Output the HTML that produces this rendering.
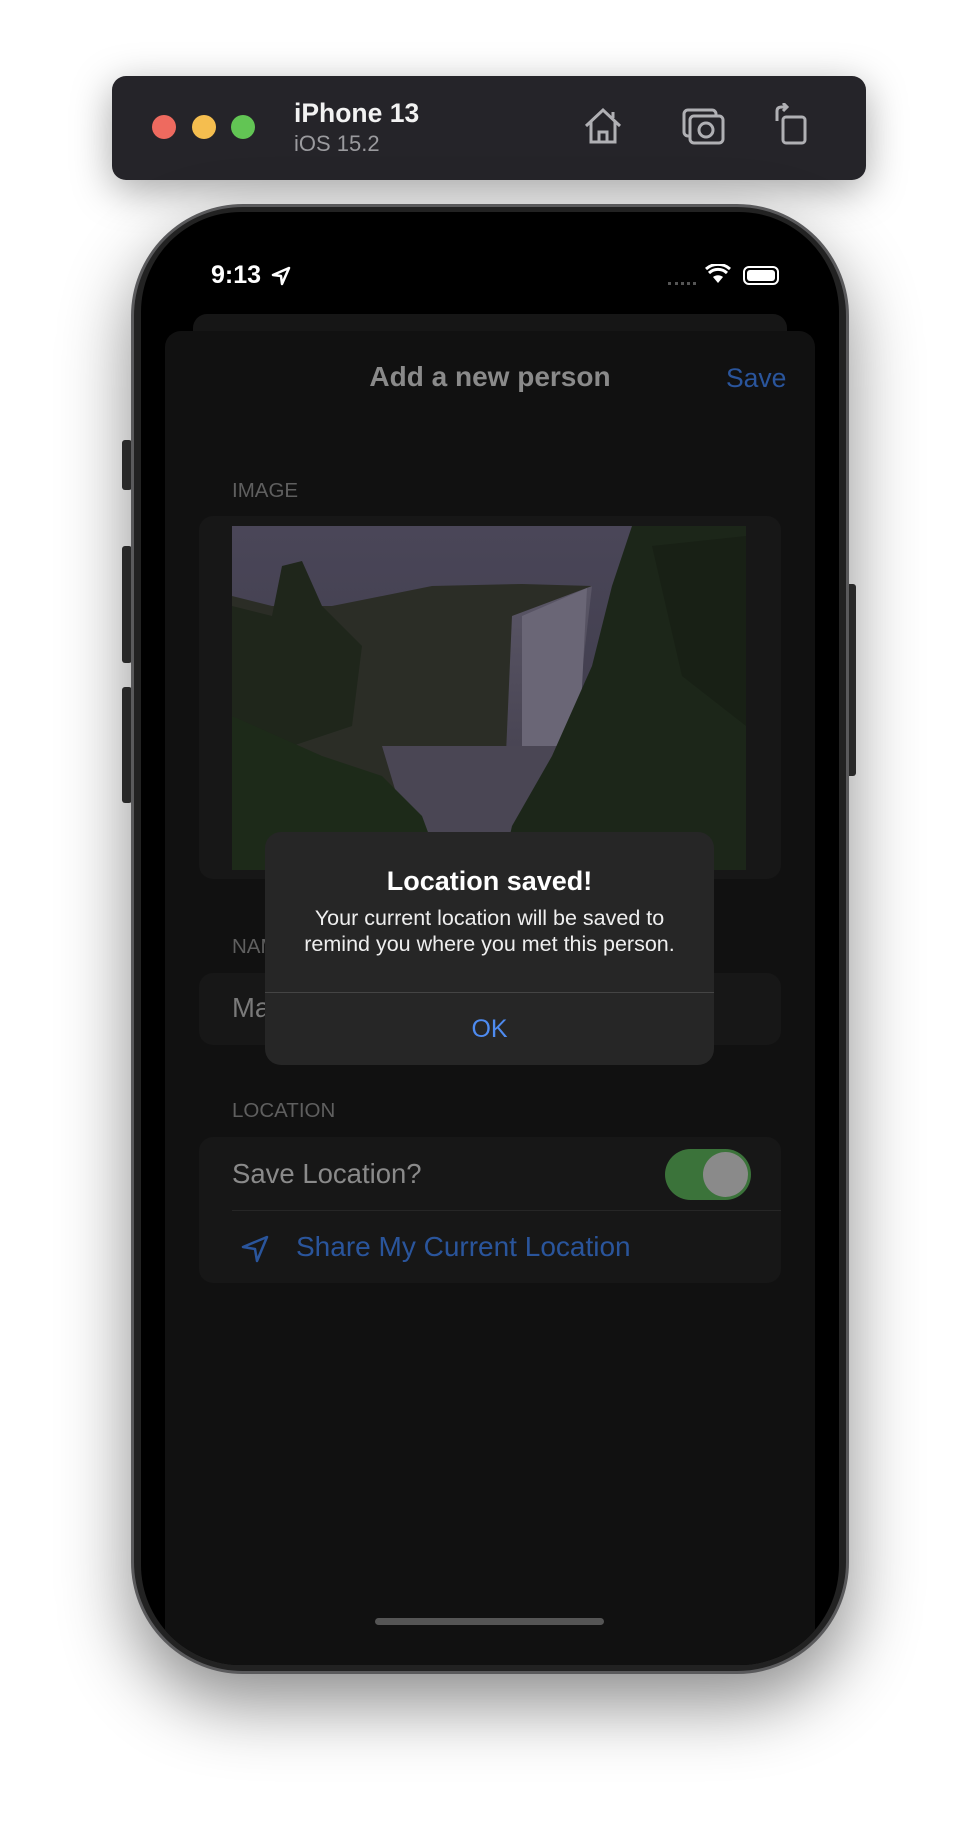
<!DOCTYPE html>
<html><head><meta charset="utf-8"><style>
*{margin:0;padding:0;box-sizing:border-box}
body{width:978px;height:1826px;background:#fff;position:relative;overflow:hidden;font-family:"Liberation Sans",sans-serif}
.abs{position:absolute}
</style></head><body>
<!-- toolbar -->
<div class="abs" style="left:112px;top:76px;width:754px;height:104px;background:#252429;border-radius:14px;box-shadow:0 10px 40px rgba(0,0,0,.35)"></div>
<div class="abs" style="left:152px;top:115px;width:24px;height:24px;border-radius:50%;background:#ee6a5f"></div>
<div class="abs" style="left:192px;top:115px;width:24px;height:24px;border-radius:50%;background:#f5be4f"></div>
<div class="abs" style="left:231px;top:115px;width:24px;height:24px;border-radius:50%;background:#62c554"></div>
<div class="abs" style="left:294px;top:98px;color:#f2f2f2;font-size:26.5px;font-weight:bold">iPhone 13</div>
<div class="abs" style="left:294px;top:131px;color:#9a9a9e;font-size:22px">iOS 15.2</div>
<svg class="abs" style="left:582px;top:106px" width="42" height="40" viewBox="0 0 42 40" fill="none" stroke="#b0b0b4" stroke-width="3"><path d="M4 20 L21 4 L38 20 M9 16 V36 H33 V16 M17 36 V26 H25 V36 M31 6 V12"/></svg>
<svg class="abs" style="left:682px;top:106px" width="44" height="40" viewBox="0 0 44 40" fill="none" stroke="#b0b0b4" stroke-width="3"><rect x="2" y="4" width="32" height="26" rx="4"/><rect x="8" y="10" width="33" height="27" rx="4" fill="#252429"/><circle cx="24" cy="24" r="7"/></svg>
<svg class="abs" style="left:773px;top:103px" width="36" height="42" viewBox="0 0 36 42" fill="none" stroke="#b0b0b4" stroke-width="3"><rect x="10" y="14" width="22" height="26" rx="3"/><path d="M4 18 V8 Q4 4 9 4 H14 M10 0 L14 4 L10 8"/></svg>
<!-- phone -->
<div class="abs" style="left:122px;top:440px;width:10px;height:50px;background:#333;border-radius:3px"></div>
<div class="abs" style="left:122px;top:546px;width:10px;height:117px;background:#333;border-radius:3px"></div>
<div class="abs" style="left:122px;top:687px;width:10px;height:116px;background:#333;border-radius:3px"></div>
<div class="abs" style="left:846px;top:584px;width:10px;height:192px;background:#333;border-radius:3px"></div>
<div class="abs" style="left:131px;top:204px;width:718px;height:1470px;background:#222;border-radius:112px;box-shadow:0 30px 70px rgba(0,0,0,.45);border:3px solid #5a5a5c"></div>
<div class="abs" style="left:141px;top:212px;width:698px;height:1453px;background:#000;border-radius:100px;overflow:hidden">
  <div class="abs" style="left:70px;top:49px;color:#fff;font-size:25px;font-weight:bold">9:13</div>
  <svg class="abs" style="left:130px;top:54px" width="20" height="20" viewBox="0 0 20 20"><path d="M18 2 L2 9 L10 10 L11 18 Z" fill="none" stroke="#fff" stroke-width="2.5" stroke-linejoin="round"/></svg>
  <div class="abs" style="left:527px;top:70px;width:28px;height:3px;border-top:3px dotted #555"></div>
  <svg class="abs" style="left:564px;top:52px" width="26" height="20" viewBox="0 0 26 20"><path d="M13 19 L8 13 A8 8 0 0 1 18 13 Z" fill="#fff"/><path d="M4 9 A13 13 0 0 1 22 9 M1 5 A18 18 0 0 1 25 5" stroke="#fff" stroke-width="3" fill="none"/></svg>
  <div class="abs" style="left:602px;top:54px;width:36px;height:19px;border:2px solid #fff;border-radius:6px;padding:2px"><div style="width:100%;height:100%;background:#fff;border-radius:3px"></div></div>
  <div class="abs" style="left:52px;top:102px;width:594px;height:40px;background:#161616;border-radius:14px"></div>
  <div class="abs" style="left:24px;top:119px;width:650px;height:1400px;background:#111;border-radius:16px"></div>
  <div class="abs" style="left:0;top:149px;width:698px;text-align:center;color:#8a8a8a;font-size:28px;font-weight:bold">Add a new person</div>
  <div class="abs" style="left:585px;top:151px;color:#2a559c;font-size:26.5px">Save</div>
  <div class="abs" style="left:91px;top:267px;color:#5f5f5f;font-size:20.5px">IMAGE</div>
  <div class="abs" style="left:58px;top:304px;width:582px;height:363px;background:#171717;border-radius:14px"></div>
  <svg class="abs" style="left:91px;top:314px" width="514" height="344" viewBox="0 0 514 344">
    <defs><linearGradient id="sky" x1="0" y1="0" x2="0" y2="1"><stop offset="0" stop-color="#4a4658"/><stop offset="1" stop-color="#3a3846"/></linearGradient>
    <linearGradient id="mist" x1="0" y1="0" x2="0" y2="1"><stop offset="0" stop-color="#5a5666"/><stop offset="1" stop-color="#3e3a48"/></linearGradient></defs>
    <rect width="514" height="344" fill="url(#sky)"/>
    <path d="M0 70 L40 80 L100 80 L200 60 L290 58 L360 60 L300 260 L0 280 Z" fill="#2b2d26"/>
    <path d="M280 90 L360 60 L330 320 L270 320 Z" fill="url(#mist)"/>
    <path d="M290 90 L355 62 L345 260 L290 240 Z" fill="#6a6676"/>
    <path d="M150 220 L330 220 L320 320 L180 320 Z" fill="#4a4654"/>
    <path d="M0 80 L40 90 L50 40 L70 35 L90 80 L130 120 L120 200 L60 220 L0 230 Z" fill="#1f261b"/>
    <path d="M0 190 L90 230 L150 250 L190 290 L210 344 L0 344 Z" fill="#1d2a19"/>
    <path d="M400 0 L514 0 L514 344 L270 344 L280 300 L320 230 L360 140 L380 60 Z" fill="#1c2619"/>
    <path d="M420 20 L514 10 L514 200 L450 150 Z" fill="#182015"/>
  </svg>
  <div class="abs" style="left:91px;top:723px;color:#5f5f5f;font-size:20.5px">NAME</div>
  <div class="abs" style="left:58px;top:761px;width:582px;height:72px;background:#171717;border-radius:14px"></div>
  <div class="abs" style="left:91px;top:780px;color:#7a7a7a;font-size:27.5px">Ma</div>
  <div class="abs" style="left:91px;top:887px;color:#5f5f5f;font-size:20.5px">LOCATION</div>
  <div class="abs" style="left:58px;top:925px;width:582px;height:146px;background:#171717;border-radius:14px"></div>
  <div class="abs" style="left:91px;top:946px;color:#8a8a8a;font-size:27.5px">Save Location?</div>
  <div class="abs" style="left:524px;top:937px;width:86px;height:51px;background:#3b733a;border-radius:26px"><div style="position:absolute;right:3px;top:3px;width:45px;height:45px;border-radius:50%;background:#8a8a8a"></div></div>
  <div class="abs" style="left:91px;top:998px;width:549px;height:1px;background:#262626"></div>
  <svg class="abs" style="left:99px;top:1022px" width="30" height="30" viewBox="0 0 30 30"><path d="M27 3 L3 13 L15 15 L17 27 Z" fill="none" stroke="#2a559c" stroke-width="2.5" stroke-linejoin="round"/></svg>
  <div class="abs" style="left:155px;top:1019px;color:#2a559c;font-size:28px">Share My Current Location</div>
  <!-- alert -->
  <div class="abs" style="left:124px;top:620px;width:449px;height:233px;background:#262626;border-radius:16px;overflow:hidden">
    <div style="position:absolute;top:34px;width:100%;text-align:center;color:#fff;font-size:27px;font-weight:bold">Location saved!</div>
    <div style="position:absolute;top:73px;width:100%;text-align:center;color:#eee;font-size:21.5px;line-height:26px">Your current location will be saved to<br>remind you where you met this person.</div>
    <div style="position:absolute;top:160px;width:100%;height:1px;background:#444"></div>
    <div style="position:absolute;top:183px;width:100%;text-align:center;color:#4e8bf0;font-size:25px">OK</div>
  </div>
  <div class="abs" style="left:234px;top:1406px;width:229px;height:7px;background:#555;border-radius:4px"></div>
</div>
</body></html>
